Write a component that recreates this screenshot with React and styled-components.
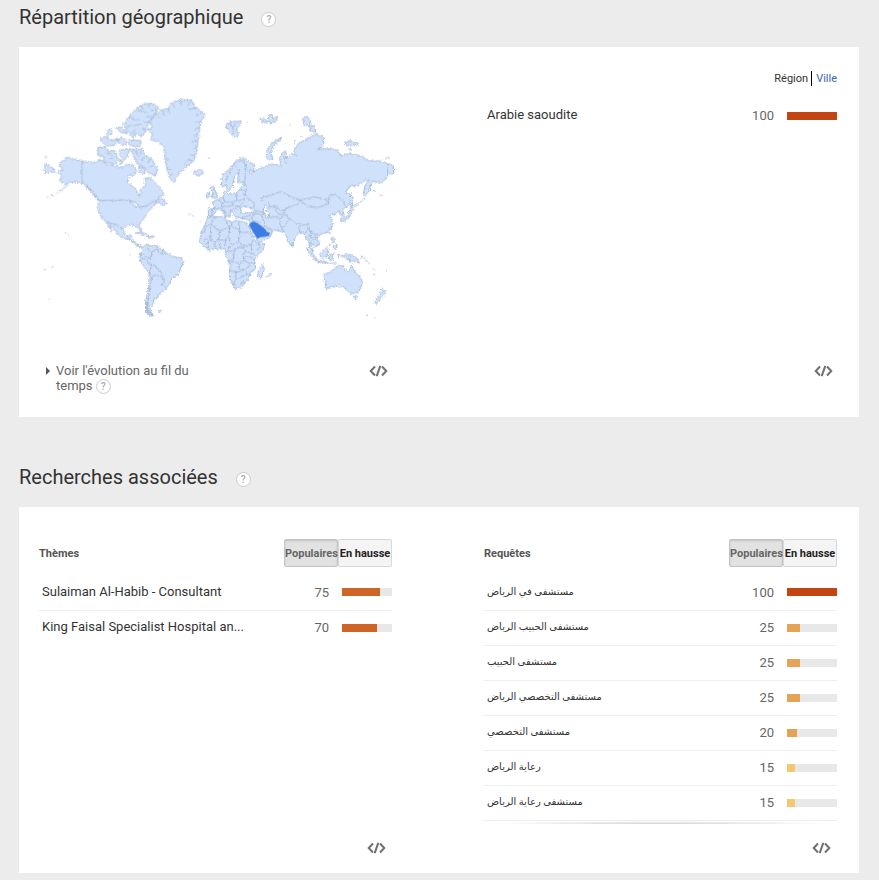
import React, { useState } from 'react';
import styled, { createGlobalStyle } from 'styled-components';

const GlobalStyle = createGlobalStyle`
  * {
    box-sizing: border-box;
  }

  body {
    margin: 0;
    background: #ececec;
    color: #333;
    font: 13px/15px Roboto, 'DejaVu Sans', sans-serif;
  }

  button {
    font-family: inherit;
    cursor: pointer;
  }
`;

const Page = styled.main`
  padding: 0 20px 7px 19px;
`;

const Section = styled.section`
  & + & {
    margin-top: 43px;
  }
`;

const SectionHeader = styled.header`
  display: flex;
  align-items: center;
  gap: 18px;
  height: 47px;
  padding-bottom: 13px;
`;

const Title = styled.h2`
  margin: 0;
  font-size: 20px;
  line-height: 24px;
  font-weight: 400;
`;

const HelpButton = styled.button`
  display: inline-flex;
  align-items: center;
  justify-content: center;
  width: 15px;
  height: 15px;
  margin-top: ${({ $inline }) => ($inline ? '0' : '4px')};
  padding: 0;
  border: 1px solid #ccc;
  border-radius: 50%;
  background: #fff;
  color: #aaa;
  font-size: 10px;
  line-height: 13px;
  font-weight: 500;
  vertical-align: middle;
`;

const Card = styled.div`
  display: grid;
  grid-template-columns: 1fr 1fr;
  gap: 92px;
  padding: 0 22px 0 20px;
  background: #fff;
`;

const Column = styled.div`
  display: flex;
  flex-direction: column;
  min-width: 0;
  padding-top: ${({ $top }) => $top}px;
`;

const MapSvg = styled.svg`
  display: block;
  width: 100%;
  height: auto;
  overflow: visible;
  fill: #d0e2fb;
  stroke: #a9bcd8;
  stroke-width: 3;
  stroke-linejoin: round;
  stroke-linecap: round;
`;

const Tabs = styled.nav`
  display: flex;
  justify-content: flex-end;
  align-items: center;
  height: 16px;
  margin-bottom: 12px;
  font-size: 11px;
`;

const Tab = styled.a`
  color: ${({ $active }) => ($active ? '#333' : '#3a66a7')};
  text-decoration: none;

  & + & {
    margin-left: 3px;
    padding-left: 4px;
    border-left: 1px solid #000;
  }
`;

const ListHeader = styled.div`
  display: flex;
  align-items: center;
  justify-content: space-between;
  height: 28px;
  margin-bottom: 8px;
`;

const ListTitle = styled.h3`
  margin: 0;
  color: #555;
  font-size: 11px;
  font-weight: 700;
`;

const Toggle = styled.div`
  display: flex;
`;

const ToggleButton = styled.button`
  width: 54px;
  height: 28px;
  padding: 0;
  border: 1px solid ${({ $active }) => ($active ? '#c4c4c4' : '#d8d8d8')};
  border-radius: 2px;
  background: ${({ $active }) => ($active ? '#e2e2e2' : '#f4f4f4')};
  box-shadow: ${({ $active }) => ($active ? 'inset 0 1px 2px rgba(0, 0, 0, 0.15)' : 'none')};
  color: ${({ $active }) => ($active ? '#666' : '#222')};
  font-size: 11px;
  font-weight: 700;
  white-space: nowrap;
`;

const Table = styled.table`
  width: 100%;
  border-collapse: collapse;
  table-layout: fixed;

  tr + tr {
    border-top: 1px solid #eee;
  }
`;

const NameCell = styled.td`
  height: 35px;
  padding: 0 0 2px 3px;
  overflow: hidden;
  text-overflow: ellipsis;
  white-space: nowrap;

  &:lang(ar) {
    font-size: 10px;
  }
`;

const ValueCell = styled.td`
  width: 40px;
  padding: 0;
  color: #666;
  text-align: right;
`;

const BarCell = styled.td`
  width: 63px;
  padding: 0 0 0 13px;
`;

const Track = styled.div`
  height: 8px;
  background: #e8e8e8;
`;

const Fill = styled.div`
  height: 100%;
  background: ${({ $color }) => $color};
`;

const ListEnd = styled.div`
  height: 4px;
  border-top: 1px solid #eee;
  background: radial-gradient(ellipse at 50% 100%, #d0d0d0, #fff 70%);
`;

const Footer = styled.footer`
  display: flex;
  align-items: flex-start;
  justify-content: space-between;
  margin-top: auto;
  padding: ${({ $pad }) => $pad};
`;

const Evolution = styled.div`
  display: flex;
  gap: 6px;
  max-width: 155px;
  padding-left: 7px;
  color: #666;
`;

const EvolutionText = styled.span`
  flex: 1;
`;

const Arrow = styled.svg`
  flex: none;
  width: 4px;
  height: 8px;
  margin-top: 4px;
  fill: #555;
`;

const IconButton = styled.button`
  display: block;
  margin-left: auto;
  padding: 2px 0 0;
  border: 0;
  background: none;

  svg {
    display: block;
    fill: none;
    stroke: #707070;
    stroke-width: 2;
  }
`;

const themes = [
  { name: 'Sulaiman Al-Habib - Consultant', value: 75 },
  { name: 'King Faisal Specialist Hospital an...', value: 70 },
];

const queries = [
  { name: 'مستشفى في الرياض', value: 100 },
  { name: 'مستشفى الحبيب الرياض', value: 25 },
  { name: 'مستشفى الحبيب', value: 25 },
  { name: 'مستشفى التخصصي الرياض', value: 25 },
  { name: 'مستشفى التخصصي', value: 20 },
  { name: 'رعاية الرياض', value: 15 },
  { name: 'مستشفى رعاية الرياض', value: 15 },
];

const barColor = (value) => {
  if (value > 90) return '#c34512';
  if (value > 50) return '#cf6427';
  if (value > 15) return '#e5a356';
  return '#f3c970';
};

function Help({ inline }) {
  return <HelpButton type="button" aria-label="Aide" $inline={inline}>?</HelpButton>;
}

function EmbedButton() {
  return (
    <IconButton type="button" aria-label="Intégrer">
      <svg width="19" height="12" viewBox="0 0 19 12">
        <path d="M6 1.5 1.7 6 6 10.5M13 1.5 17.3 6 13 10.5M11.3 .8 7.7 11.2" />
      </svg>
    </IconButton>
  );
}

function DataTable({ label, rows, lang }) {
  return (
    <Table aria-label={label}>
      <tbody>
        {rows.map((row) => (
          <tr key={row.name}>
            <NameCell lang={lang}>{row.name}</NameCell>
            <ValueCell>{row.value}</ValueCell>
            <BarCell>
              <Track>
                <Fill $color={barColor(row.value)} style={{ width: `${row.value}%` }} />
              </Track>
            </BarCell>
          </tr>
        ))}
      </tbody>
    </Table>
  );
}

function SearchList({ title, rows, lang, more }) {
  const [sort, setSort] = useState('top');

  return (
    <Column $top={32}>
      <ListHeader>
        <ListTitle>{title}</ListTitle>
        <Toggle>
          <ToggleButton type="button" $active={sort === 'top'} onClick={() => setSort('top')}>
            Populaires
          </ToggleButton>
          <ToggleButton type="button" $active={sort === 'rising'} onClick={() => setSort('rising')}>
            En hausse
          </ToggleButton>
        </Toggle>
      </ListHeader>
      <DataTable label={title} rows={rows} lang={lang} />
      {more && <ListEnd />}
      <Footer $pad="16px 6px 19px 0">
        <EmbedButton />
      </Footer>
    </Column>
  );
}

function WorldMap() {
  return (
    <MapSvg viewBox="12 0 1059 705" role="img" aria-label="Carte du monde">
      <defs>
        <filter id="coast" x="-5%" y="-5%" width="110%" height="110%" colorInterpolationFilters="sRGB">
          <feTurbulence type="fractalNoise" baseFrequency="0.18" numOctaves="2" seed="4" />
          <feDisplacementMap in="SourceGraphic" scale="12" xChannelSelector="R" yChannelSelector="G" />
        </filter>
      </defs>

      <g filter="url(#coast)">
        {/* Greenland, Iceland, Canadian Arctic */}
        <path d="M338 118 352 112 345 95 362 72 380 60 398 55 410 38 440 28 470 32 482 52 500 66 511 75 496 95 492 130 488 160 484 190 476 212 460 228 440 240 425 262 418 278 404 266 396 240 390 200 386 170 370 155 345 148 352 135Z" />
        <path fill="none" d="M366 74 374 84M384 62 386 76M400 56 404 70M412 40 420 54M436 30 440 44M466 36 458 46M482 54 462 58M500 68 484 76M496 92 482 100M492 112 480 118M490 132 478 138M488 152 474 156M486 172 472 178M480 194 468 196M472 212 458 210M456 228 448 220M390 206 400 210M396 236 406 238M404 256 414 252" />
        <path d="M476 244 498 238 506 248 490 258 478 252Z" />
        <path d="M284 78 300 60 325 42 350 40 371 52 360 72 345 90 335 115 322 140 300 130 296 145 275 125 270 100ZM280 150 318 152 314 170 286 166ZM196 148 212 136 222 150 246 150 240 166 215 168ZM248 150 262 142 276 158 262 168ZM244 112 262 112 276 130 256 126ZM216 124 228 116 232 130 222 136ZM240 150 246 142 252 150ZM262 98 266 106" />
        <path fill="none" d="M284 80 300 90 310 88M296 108 318 102M310 60 334 68M292 130 300 118M318 48 324 58M344 42 340 52M366 58 350 62M352 80 336 80M340 98 326 96M334 116 320 118M276 112 288 106" />
        <path d="M190 172 210 170 216 182 240 182 250 212 236 222 205 214 208 200 190 196ZM254 180 286 176 276 200 266 210 254 196ZM290 178 322 178 330 196 350 206 368 236 362 258 340 248 328 232 306 220 296 200ZM312 228 330 234 330 250 316 250ZM254 208 266 216 258 222Z" />
        <path fill="none" d="M304 182 308 200M318 182 316 194M328 200 320 212M344 208 338 220M358 226 346 230M216 188 230 194M222 204 234 204" />

        {/* North and Central America */}
        <path d="M142 214 120 208 98 202 80 214 72 226 84 238 68 244 80 258 74 272 90 284 108 276 130 276 142 280Z" />
        <path d="M98 286 82 298 66 308M54 314 48 316M40 320 36 320M30 222 56 236 60 248 44 246 30 250ZM30 200 36 201" />
        <path d="M142 214 175 218 196 210 220 224 246 228 262 234 272 224 296 226 304 240 300 254 280 258 278 280 300 294 314 320 318 296 332 286 328 266 345 262 360 278 378 296 386 314 368 326 378 326 388 330 394 342 380 346 368 334 352 336 336 346 318 352 300 340 284 331 192 331 176 310 150 284 142 280Z" />
        <path fill="none" strokeWidth="5" d="M152 288 168 302 180 318 190 330" />
        <path d="M192 331 284 331 300 340 318 352 336 346 352 336 368 334 352 350 338 366 324 390 312 402 318 424 308 412 290 404 270 408 264 416 240 404 214 396 202 388 190 362Z" />
        <path d="M214 396 240 404 264 416 268 430 274 440 284 434 290 438 284 448 298 452 306 465 324 470 322 474 304 466 290 452 268 446 246 432 236 414 224 402 232 424 218 406ZM304 428 320 424 336 434 320 432ZM334 438 358 439 346 445ZM278 442 282 450M290 454 298 454" />
        <path fill="#fff" d="M284 334 298 336 308 342 304 350 296 344ZM312 350 324 350 318 354Z" />

        {/* South America */}
        <g transform="translate(0 315)">
          <path d="M322 158 334 147 342 152 366 152 384 166 400 178 412 184 440 190 445 202 436 220 430 240 412 248 404 266 392 284 376 294 366 306 356 318 352 330 344 340 356 362 344 364 332 350 332 320 340 280 343 232 326 214 314 192 318 176Z" />
          <path fill="none" d="M342 152 336 164 350 172 366 162 374 176 388 176 398 176M366 152 368 164M384 166 380 176M350 172 348 188 334 196 344 208 362 212 368 224 380 232 378 242 388 252 382 268 392 278M318 176 330 182 344 190M322 192 330 190M343 232 350 212M343 232 352 246 366 238 380 250 388 252M350 246 344 280 340 316 338 344 344 350M370 348 380 346 374 352Z" />
          <path fill="none" strokeWidth="6" d="M336 322 336 348 350 360" />
        </g>

        {/* Europe and Asia */}
        <path d="M560 270 562 256 586 234 600 215 625 203 634 210 660 226 655 244 638 240 648 250 672 236 690 232 700 222 726 224 738 230 734 206 740 190 752 182 756 208 772 190 784 198 776 180 790 160 820 145 840 132 866 142 866 164 850 178 890 176 910 182 918 198 945 190 980 198 1000 212 1040 214 1058 220 1075 228 1076 252 1058 248 1058 262 1040 278 1010 274 1004 298 992 318 985 312 990 286 1004 268 985 274 970 288 945 286 932 308 950 312 950 335 936 350 922 358 928 376 918 378 912 364 904 366 898 376 890 370 884 378 890 390 892 405 880 425 855 435 842 440 854 455 852 465 838 471 826 456 834 486 824 474 822 456 814 445 806 430 792 427 780 445 772 470 760 455 748 427 735 423 715 420 695 413 686 403 694 416 712 423 705 440 670 460 662 440 643 405 645 390 620 386 598 380 594 368 586 364 584 382 574 372 566 358 558 352 572 370 578 374 572 380 564 366 550 354 540 366 534 378 520 378 520 357 540 355 532 337 550 327 565 320 568 304 576 302 578 312 605 310 612 298 630 278 610 278 608 260 614 242 600 258 596 270 592 290 582 303 572 288 560 290Z" />
        <path fill="#fff" d="M618 352 636 348 644 354 662 362 650 369 620 368ZM688 346 698 350 694 362 704 372 702 384 692 382 686 364Z" />
        <path fill="none" d="M572 288 576 262 598 222 614 242M612 216 624 210 632 226 630 274M630 278 636 296 628 312 644 330 660 340 654 352M682 334 680 322 708 316 740 304 768 320 794 330 790 342 760 352 742 364 728 356 708 350 700 352M794 330 816 326 840 320 880 332 880 342 850 352 820 350 794 330M880 336 884 316 900 314 926 334 928 344 934 350M700 384 718 380 736 386 752 374 748 364 760 352M736 386 734 402 748 426M752 374 764 386 776 396 800 406 808 404 822 404M764 386 748 410 740 420M792 412 794 426M812 430 820 408 826 424 838 434 848 432M826 440 836 446 850 454M826 424 824 450M540 355 552 358M532 356 530 376M550 327 562 342 558 352M566 324 568 334 590 338 604 332 606 312M590 338 600 348 614 350M568 336 560 348 578 350 596 344M604 332 628 330 628 312M622 340 610 350 596 358 584 360M614 298 628 302M646 390 658 372 668 370 680 376 690 402M646 376 620 384M658 372 650 366M662 362 684 366M680 376 686 368M652 392 664 394 676 396M722 360 730 372 744 374M700 340 708 350 728 348M1058 222 1058 246" />
        <path d="M948 312 954 322 952 350 946 346ZM950 351 956 359 948 365 944 381 930 391 914 395 916 387 934 381 942 365ZM878 428 886 428M888 420 891 414M956 352 974 338 990 324M1018 302 1022 304M1034 314 1040 318" />
        <path d="M526 292 538 288 544 314 548 322 530 324 534 306ZM516 310 524 306 524 320 516 322Z" />
        <g transform="translate(510 30)">
          <path d="M184 170 186 150 200 130 228 112 230 118 206 136 196 158 204 176 194 180ZM64 72 80 64 110 64 104 78 92 88 104 100 88 112 76 100 66 84ZM165 58 176 54 184 60 190 66 176 68ZM190 50 200 42 204 56 218 50 214 62 196 70ZM294 56 306 48 316 62 314 74 298 76ZM314 76 330 80 332 96 318 92ZM420 126 440 122 448 130 462 132 440 136 424 136ZM432 148 440 150M544 174 552 172M254 76 256 76M128 66 130 65M268 130 270 118M286 114 290 110" />
          <path fill="none" d="M76 70 84 84 92 70M84 84 86 100M338 148 350 142M236 170 244 190" />
        </g>

        {/* Africa and Oceania */}
        <g transform="translate(480 315)">
          <path d="M40 66 60 66 90 64 96 76 112 82 122 76 156 84 162 96 176 130 188 148 210 146 204 164 186 182 178 196 182 220 166 234 158 256 140 276 120 282 112 268 102 238 106 210 98 196 90 178 94 166 82 160 60 162 40 166 24 152 14 140 18 112 30 88ZM204 210 208 222 198 250 188 244 190 226Z" />
          <path fill="none" d="M18 112 30 110 30 96 46 88 60 68M46 88 74 108 104 96 92 78M46 94 48 134 26 134M74 108 72 130 60 140 46 136M104 96 102 120 92 136 70 134M108 82 112 96 134 104 134 80M134 104 134 112 164 112M134 112 130 138 144 154 168 150 176 132M102 130 108 150 130 140M60 140 60 160M40 138 40 164M72 140 76 160M92 136 88 158M108 150 96 168 118 168 122 160 144 156M28 144 38 150M144 154 150 168 182 180M118 168 114 196 100 196M150 168 144 176 146 196 134 206 118 200 104 204M178 190 150 184M146 196 162 204 180 204M134 206 132 222 150 224 166 208M102 228 132 230 150 224 160 240M124 230 122 254 116 266M124 252 142 246 152 238M140 262 146 258 148 266 142 268ZM112 268 122 268M168 150 170 166M190 148 196 160 186 164" />
          <path d="M388 238 404 232 418 222 430 212 446 212 448 222 462 230 470 208 478 228 498 250 502 266 490 292 468 296 450 280 436 272 412 274 394 282 390 262ZM478 302 488 303 483 314ZM562 280 566 290 574 292 562 306 556 300ZM554 304 560 310 546 326 538 322Z" />
          <path d="M336 160 350 172 366 192 360 194 344 178ZM364 196 384 198 400 203 398 206 366 200ZM374 178 392 160 402 166 396 184 382 190ZM404 180 420 174 412 184 416 194 406 196ZM438 182 452 180 466 178 484 188 494 204 478 198 462 200 456 190ZM408 128 416 126 418 140 414 142ZM414 156 424 148 426 158 420 162ZM400 156 408 146M404 206 424 204M430 178 432 188M466 178 466 198M496 190 504 184M508 190 524 206M534 220 540 224M536 236 540 240M572 230 578 224M292 146 295 154M212 246 230 236M514 362 518 360M538 370 540 370" />
        </g>
        <path d="M90 428 92 429M98 434 102 437M28 539 32 539M51 531 53 531M42 630 44 630M283 494 286 494M462 373 464 374M472 376 474 377M496 394 498 395M522 204 524 204" />
      </g>

      {/* Saudi Arabia */}
      <path
        fill="#3b7de2"
        stroke="#3b7de2"
        strokeWidth="1"
        d="M643 405 648 398 656 395 668 400 680 409 690 417 696 426 704 428 702 437 688 440 676 441 667 446 660 434 652 421Z"
      />
    </MapSvg>
  );
}

export default function App() {
  return (
    <>
      <GlobalStyle />
      <Page>
        <Section>
          <SectionHeader>
            <Title>Répartition géographique</Title>
            <Help />
          </SectionHeader>
          <Card>
            <Column $top={43}>
              <WorldMap />
              <Footer $pad="38px 4px 23px 0">
                <Evolution>
                  <Arrow viewBox="0 0 4 8">
                    <path d="M0 0 4 4 0 8Z" />
                  </Arrow>
                  <EvolutionText>
                    Voir l&apos;évolution au fil du temps <Help inline />
                  </EvolutionText>
                </Evolution>
                <EmbedButton />
              </Footer>
            </Column>
            <Column $top={23}>
              <Tabs>
                <Tab href="#region" $active>Région</Tab>
                <Tab href="#ville">Ville</Tab>
              </Tabs>
              <DataTable label="Région" rows={[{ name: 'Arabie saoudite', value: 100 }]} />
              <Footer $pad="0 4px 40px 0">
                <EmbedButton />
              </Footer>
            </Column>
          </Card>
        </Section>

        <Section>
          <SectionHeader>
            <Title>Recherches associées</Title>
            <Help />
          </SectionHeader>
          <Card>
            <SearchList title="Thèmes" rows={themes} />
            <SearchList title="Requêtes" rows={queries} lang="ar" more />
          </Card>
        </Section>
      </Page>
    </>
  );
}
